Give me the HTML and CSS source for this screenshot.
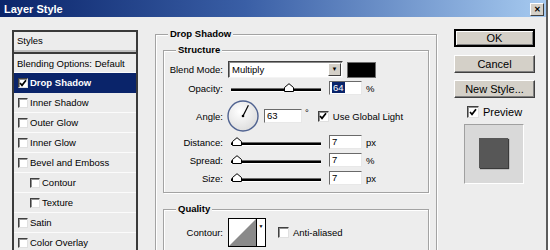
FILE: index.html
```html
<!DOCTYPE html>
<html lang="en">
<head>
<meta charset="UTF-8" />
<title>Layer Style</title>
<link rel="stylesheet" href="styles.css">
</head>
<body>
<div class="window">
  <div class="titlebar">
    <span class="title">Layer Style</span>
    <span class="close">&#x2715;</span>
  </div>

  <div class="content">
    <!-- Styles list on the left -->
    <div class="styles-list">
      <div class="head">Styles</div>
      <div class="item plain">Blending Options: Default</div>
      <div class="item sel"><span class="cb on"><svg viewBox="0 0 8 8"><path d="M1 4 L3 6.3 L7 1.2"/></svg></span>Drop Shadow</div>
      <div class="item"><span class="cb"></span>Inner Shadow</div>
      <div class="item"><span class="cb"></span>Outer Glow</div>
      <div class="item"><span class="cb"></span>Inner Glow</div>
      <div class="item"><span class="cb"></span>Bevel and Emboss</div>
      <div class="item sub"><span class="cb"></span>Contour</div>
      <div class="item sub"><span class="cb"></span>Texture</div>
      <div class="item"><span class="cb"></span>Satin</div>
      <div class="item"><span class="cb"></span>Color Overlay</div>
    </div>

    <!-- Settings -->
    <fieldset class="group outer">
      <legend>Drop Shadow</legend>

      <fieldset class="group inner">
        <legend>Structure</legend>
        <div class="row blend">
          <span class="lbl">Blend Mode:</span>
          <span class="select"><span class="sel-text">Multiply</span><span class="arrow">&#9660;</span></span>
          <span class="swatch"></span>
        </div>
        <div class="row opacity">
          <span class="lbl">Opacity:</span>
          <span class="slider"><span class="track"></span><span class="thumb" style="left: 53px"><svg viewBox="0 0 10 9"><path d="M0.5 8.5 V4.5 L5 0.7 L9.5 4.5 V8.5 Z"/></svg></span></span>
          <span class="field"><span class="hl">64</span></span>
          <span class="unit">%</span>
        </div>
        <div class="row angle">
          <span class="lbl">Angle:</span>
          <svg class="dial" viewBox="0 0 32 32">
            <defs>
              <radialGradient id="dialfill" cx="0.4" cy="0.35" r="0.7">
                <stop offset="0" stop-color="#ffffff"/>
                <stop offset="1" stop-color="#dcdcdc"/>
              </radialGradient>
            </defs>
            <circle cx="16" cy="16" r="15" fill="url(#dialfill)" stroke="#4f6290" stroke-width="1.4"/>
            <line x1="16" y1="16" x2="21.4" y2="5.3" stroke="#000" stroke-width="1.2"/>
            <circle cx="16" cy="16" r="1.3" fill="#000"/>
          </svg>
          <span class="field wide">63</span>
          <span class="deg">&deg;</span>
          <span class="cb on gl"><svg viewBox="0 0 8 8"><path d="M1 4 L3 6.3 L7 1.2"/></svg></span>
          <span class="cb-text">Use Global Light</span>
        </div>
        <div class="row dist">
          <span class="lbl">Distance:</span>
          <span class="slider"><span class="track"></span><span class="thumb" style="left: 1px"><svg viewBox="0 0 10 9"><path d="M0.5 8.5 V4.5 L5 0.7 L9.5 4.5 V8.5 Z"/></svg></span></span>
          <span class="field">7</span>
          <span class="unit">px</span>
        </div>
        <div class="row dist">
          <span class="lbl">Spread:</span>
          <span class="slider"><span class="track"></span><span class="thumb" style="left: 1px"><svg viewBox="0 0 10 9"><path d="M0.5 8.5 V4.5 L5 0.7 L9.5 4.5 V8.5 Z"/></svg></span></span>
          <span class="field">7</span>
          <span class="unit">%</span>
        </div>
        <div class="row dist">
          <span class="lbl">Size:</span>
          <span class="slider"><span class="track"></span><span class="thumb" style="left: 1px"><svg viewBox="0 0 10 9"><path d="M0.5 8.5 V4.5 L5 0.7 L9.5 4.5 V8.5 Z"/></svg></span></span>
          <span class="field">7</span>
          <span class="unit">px</span>
        </div>
      </fieldset>

      <fieldset class="group inner quality">
        <legend>Quality</legend>
        <div class="row contour">
          <span class="lbl">Contour:</span>
          <span class="contour-box">
            <svg viewBox="0 0 27 27" class="curve">
              <rect width="27" height="27" fill="#fff"/>
              <polygon points="0,27 27,0 27,27" fill="#8a8a8a"/>
            </svg>
            <span class="c-arrow">&#9660;</span>
          </span>
          <span class="cb aa"></span>
          <span class="cb-text">Anti-aliased</span>
        </div>
      </fieldset>
    </fieldset>

    <!-- Buttons -->
    <div class="side">
      <span class="btn default">OK</span>
      <span class="btn">Cancel</span>
      <span class="btn">New Style...</span>
      <div class="preview-row">
        <span class="cb on"><svg viewBox="0 0 8 8"><path d="M1 4 L3 6.3 L7 1.2"/></svg></span>
        <span>Preview</span>
      </div>
      <div class="preview"><span class="square"></span></div>
    </div>
  </div>
</div>
</body>
</html>
```

FILE: styles.css
```css
/* Base */
* {
  box-sizing: border-box;
}
html, body {
  margin: 0;
  padding: 0;
  width: 550px;
  height: 250px;
  overflow: hidden;
  background: #ffffff;
  font-family: 'Liberation Sans', Arial, sans-serif;
  font-size: 9.5px;
  color: #000;
}

.window {
  width: 548px;
  height: 250px;
  background: #ededed;
  border-right: 2px solid #5c5c5c;
  overflow: hidden;
}

/* Title bar */
.titlebar {
  height: 17px;
  display: flex;
  align-items: center;
  justify-content: space-between;
  padding: 0 2px 0 4px;
  background: linear-gradient(to right, #0a246a 0%, #3a5fa6 45%, #a6caf0 100%);
}
.title {
  color: #fff;
  font-weight: bold;
  font-size: 11px;
}
.close {
  width: 14px;
  height: 13px;
  margin-top: 1px;
  background: #d4d0c8;
  border: 1px solid;
  border-color: #fff #404040 #404040 #fff;
  font-size: 8px;
  font-weight: bold;
  line-height: 11px;
  text-align: center;
}

.content {
  display: flex;
  align-items: flex-start;
  padding-left: 12px;
}

/* Styles list */
.styles-list {
  width: 126px;
  height: 240px;
  margin-top: 13px;
  border: 2px solid #3a3a3a;
  border-bottom: none;
  background: #ececec;
  flex-shrink: 0;
}
.styles-list .head {
  height: 22px;
  padding-left: 3px;
  line-height: 18px;
  border-bottom: 2px solid #3a3a3a;
  box-shadow: inset 0 -2px 0 #bdbdbd;
}
.styles-list .item {
  height: 20px;
  display: flex;
  align-items: center;
  padding-left: 4px;
  border-bottom: 1px solid #fbfbfb;
}
.styles-list .item.plain {
  padding-left: 3px;
  height: 19px;
}
.styles-list .item.sub {
  padding-left: 16px;
}
.styles-list .item.sel {
  background: #0a246a;
  color: #fff;
  font-weight: bold;
  border-bottom-color: #0a246a;
}

/* Checkboxes */
.cb {
  width: 10px;
  height: 10px;
  margin-right: 2px;
  flex-shrink: 0;
  background: #fff;
  border: 1px solid;
  border-color: #404040 #e0e0e0 #e0e0e0 #404040;
  box-shadow: inset 1px 1px 0 #909090;
  display: inline-flex;
  align-items: center;
  justify-content: center;
}
.cb svg {
  width: 8px;
  height: 8px;
}
.cb svg path {
  fill: none;
  stroke: #000;
  stroke-width: 1.7;
}

/* Group boxes */
.group {
  margin: 0;
  border: 1px solid #a3a3a3;
  box-shadow: inset 1px 1px 0 #fff, 1px 1px 0 #fff;
}
.group legend {
  font-weight: bold;
  line-height: 14px;
  padding: 0 2px;
  background: #ededed;
}
.outer {
  width: 282px;
  height: 260px;
  margin: 10px 0 0 17px;
  padding: 2px 7px 0 7px;
  flex-shrink: 0;
}
.outer > legend {
  margin-left: 5px;
}
.inner {
  padding: 2px 0 7px 0;
}
.inner > legend {
  margin-left: 12px;
}
.quality {
  margin-top: 9px;
  height: 60px;
}

/* Rows */
.row {
  display: flex;
  align-items: center;
  height: 14px;
}
.lbl {
  width: 59px;
  margin-right: 5px;
  text-align: right;
  flex-shrink: 0;
}
.row.blend {
  height: 21px;
}
.row.opacity {
  margin-top: 1px;
}
.row.angle {
  height: 32px;
  margin-top: 5px;
}
.row.dist {
  margin-top: 4px;
}
.row.angle + .row.dist {
  margin-top: 3px;
}
.row.contour {
  height: 29px;
}

/* Controls */
.select {
  width: 115px;
  height: 17px;
  display: flex;
  align-items: center;
  justify-content: space-between;
  background: #fff;
  border: 1px solid;
  border-color: #404040 #f4f4f4 #f4f4f4 #404040;
  box-shadow: inset 1px 1px 0 #8a8a8a;
  padding: 1px 1px 1px 3px;
}
.select .arrow {
  width: 13px;
  height: 13px;
  background: #d4d0c8;
  border: 1px solid;
  border-color: #fff #404040 #404040 #fff;
  font-size: 6px;
  line-height: 11px;
  text-align: center;
}
.swatch {
  width: 29px;
  height: 16px;
  margin-left: 4px;
  background: #000;
  border: 1px solid #6e6e6e;
}

.slider {
  position: relative;
  width: 90px;
  height: 14px;
  margin-left: 3px;
  display: flex;
  align-items: center;
}
.track {
  width: 100%;
  height: 4px;
  margin-top: 4px;
  background: #000;
  border-top: 1px solid #6a6a6a;
  border-bottom: 1px solid #fff;
}
.thumb {
  position: absolute;
  top: 2px;
  width: 10px;
  height: 9px;
}
.thumb svg {
  display: block;
  width: 10px;
  height: 9px;
}
.thumb svg path {
  fill: #fff;
  stroke: #000;
  stroke-width: 1;
}

.field {
  width: 33px;
  height: 14px;
  margin-left: 8px;
  padding-left: 2px;
  background: #fff;
  border: 1px solid;
  border-color: #6a6a6a #e8e8e8 #e8e8e8 #6a6a6a;
  line-height: 12px;
  flex-shrink: 0;
}
.field .hl {
  background: #0a246a;
  color: #fff;
  padding: 0 1px;
}
.field.wide {
  width: 38px;
  margin-left: 5px;
}
.unit {
  margin-left: 4px;
}
.dial {
  width: 32px;
  height: 32px;
  margin-left: -1px;
  flex-shrink: 0;
}
.deg {
  margin-left: 3px;
  align-self: flex-start;
  margin-top: 7px;
}
.cb.gl {
  width: 11px;
  height: 11px;
  margin-left: 9px;
}
.cb-text {
  margin-left: 2px;
}

.contour-box {
  width: 38px;
  height: 29px;
  display: flex;
  border: 1px solid #000;
  background: #fff;
}
.contour-box .curve {
  width: 27px;
  height: 27px;
  display: block;
}
.c-arrow {
  flex: 1;
  border-left: 1px solid #000;
  font-size: 5px;
  line-height: 14px;
  text-align: center;
}
.cb.aa {
  width: 11px;
  height: 11px;
  margin-left: 12px;
}

/* Right column */
.side {
  width: 81px;
  margin: 12px 0 0 17px;
  display: flex;
  flex-direction: column;
  font-size: 11px;
  flex-shrink: 0;
}
.btn {
  height: 18px;
  background: #d4d0c8;
  border: 1px solid;
  border-color: #fff #404040 #404040 #fff;
  box-shadow: inset -1px -1px 0 #808080;
  text-align: center;
  line-height: 16px;
  margin-top: 7px;
}
.btn.default {
  margin-top: 0;
  border: 2px solid #000;
  box-shadow: inset 1px 1px 0 #fff, inset -1px -1px 0 #808080;
  line-height: 14px;
}
.btn + .btn:not(.default) {
  margin-top: 8px;
}
.btn + .btn + .btn {
  margin-top: 7px;
}
.preview-row {
  display: flex;
  align-items: center;
  height: 14px;
  margin: 7px 0 0 13px;
}
.preview-row .cb {
  width: 12px;
  height: 12px;
  margin-right: 4px;
}
.preview {
  width: 60px;
  height: 60px;
  margin: 5px 0 0 10px;
  background: #d9d9d9;
  border: 1px solid;
  border-color: #a0a0a0 #fff #fff #a0a0a0;
  display: flex;
  align-items: center;
  justify-content: center;
}
.square {
  width: 29px;
  height: 30px;
  margin: 0 1px 2px 0;
  background: #575757;
  box-shadow: 1px 1px 1px #3a3a3a;
}
```
